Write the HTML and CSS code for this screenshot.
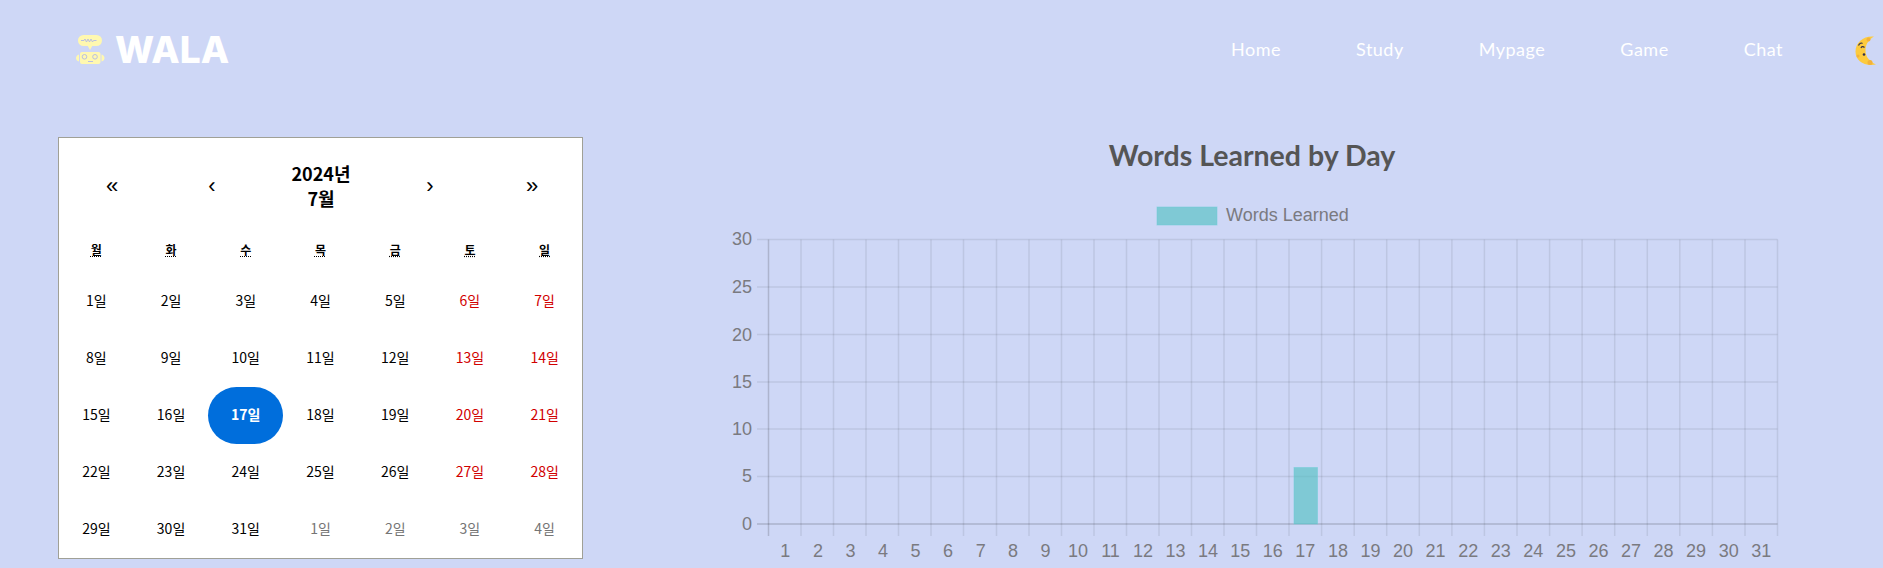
FILE: index.html
```html
<!DOCTYPE html>
<html lang="ko">
<head>
    <meta charset="UTF-8">
    <title>WALA</title>
    <link rel="stylesheet" href="styles.css">
</head>
<body>
    <header class="header">
        <a class="logo" href="#">
            <svg class="logo-icon" viewBox="0 0 30 31" width="30" height="31">
                <rect x="3" y="1" width="24" height="11" rx="5.5" fill="#fff8b0"/>
                <path d="M12.5 11.5h5L15 16z" fill="#fff8b0"/>
                <path d="M6 6.500h3l1-1.500 1.500 3 1.500-3 1.500 3 1.500-3 1.500 3 1-1.500h3" fill="none" stroke="#b9bfe0" stroke-width="1"/>
                <rect x="5" y="18" width="20.500" height="12" rx="2" fill="#fff8b0"/>
                <path d="M4 20.500c-2 .5-3 2-3 3.500s1 3 3 3.500zM26.500 20.500c2 .5 3 2 3 3.500s-1 3-3 3.500z" fill="#fff8b0"/>
                <circle cx="9.500" cy="22.800" r="2.300" fill="none" stroke="#b9bfe0" stroke-width="1"/>
                <circle cx="20" cy="22.800" r="2.300" fill="none" stroke="#b9bfe0" stroke-width="1"/>
                <path d="M13 27.500h5" stroke="#b9bfe0" stroke-width="1"/>
            </svg>
            <span class="logo-text">WALA</span>
        </a>
        <nav class="nav">
            <a href="#">Home</a>
            <a href="#">Study</a>
            <a href="#">Mypage</a>
            <a href="#">Game</a>
            <a href="#">Chat</a>
            <svg class="moon" viewBox="0 0 22 30" width="22" height="30">
                <path d="M19 .5C9 -.5 .5 6 .5 15.500S9 30.500 21 28.500C14 25 10.500 20.500 10.500 14.500S13.500 4 19 .5z" fill="#fdcb3e"/>
                <circle cx="13.500" cy="3.500" r="2" fill="#f3b23a"/>
                <circle cx="15" cy="26.500" r="2.500" fill="#f3b23a"/>
                <circle cx="3" cy="20" r="1.500" fill="#f3b23a"/>
                <path d="M3.500 9.500c1-2.500 3-3 4-2M6 12c.5-1.500 2-2 3.500-.5" fill="none" stroke="#33304a" stroke-width="1.200"/>
                <circle cx="9" cy="18.500" r="1.300" fill="#33304a"/>
            </svg>
        </nav>
    </header>

    <main class="main">
        <section class="calendar">
            <div class="cal-nav">
                <button>«</button>
                <button>‹</button>
                <span class="cal-title">2024년<br>7월</span>
                <button>›</button>
                <button>»</button>
            </div>
            <div class="cal-weekdays">
                <abbr title="월요일">월</abbr>
                <abbr title="화요일">화</abbr>
                <abbr title="수요일">수</abbr>
                <abbr title="목요일">목</abbr>
                <abbr title="금요일">금</abbr>
                <abbr title="토요일">토</abbr>
                <abbr title="일요일">일</abbr>
            </div>
            <div class="cal-days">
                <div>1일</div><div>2일</div><div>3일</div><div>4일</div><div>5일</div><div class="weekend">6일</div><div class="weekend">7일</div>
                <div>8일</div><div>9일</div><div>10일</div><div>11일</div><div>12일</div><div class="weekend">13일</div><div class="weekend">14일</div>
                <div>15일</div><div>16일</div><div class="active">17일</div><div>18일</div><div>19일</div><div class="weekend">20일</div><div class="weekend">21일</div>
                <div>22일</div><div>23일</div><div>24일</div><div>25일</div><div>26일</div><div class="weekend">27일</div><div class="weekend">28일</div>
                <div>29일</div><div>30일</div><div>31일</div><div class="other">1일</div><div class="other">2일</div><div class="other">3일</div><div class="other">4일</div>
            </div>
        </section>

        <section class="chart">
            <h2 class="chart-title">Words Learned by Day</h2>
            <svg class="chart-svg" viewBox="700 190 1104 378" width="1104" height="378">
                <!-- legend -->
                <rect x="1157" y="207" width="60" height="18" class="bar"/>
                <text x="1226" y="221" class="label">Words Learned</text>
                <!-- grid -->
                <path class="grid" d="M757 239.500H1777.500M757 287H1777.500M757 334.500H1777.500M757 382H1777.500M757 429H1777.500M757 476.500H1777.500"/>
                <path class="grid" d="M801 239.500V536M833.500 239.500V536M866 239.500V536M898.500 239.500V536M931 239.500V536M963.500 239.500V536M996.500 239.500V536M1029 239.500V536M1061.500 239.500V536M1094 239.500V536M1126.500 239.500V536M1159 239.500V536M1191.500 239.500V536M1224 239.500V536M1256.500 239.500V536M1289 239.500V536M1321.600 239.500V536M1354.200 239.500V536M1386.700 239.500V536M1419.300 239.500V536M1451.900 239.500V536M1484.400 239.500V536M1517 239.500V536M1549.600 239.500V536M1582.100 239.500V536M1614.700 239.500V536M1647.300 239.500V536M1679.800 239.500V536M1712.400 239.500V536M1745 239.500V536M1777.500 239.500V536"/>
                <path class="axis" d="M768.500 239.500V536"/>
                <path class="axis axis-x" d="M757 524H1777.500"/>
                <!-- data -->
                <rect x="1294" y="467.500" width="23.500" height="56.500" class="bar"/>
                <!-- y labels -->
                <g class="label label-y">
                    <text x="752" y="244.500">30</text>
                    <text x="752" y="292.500">25</text>
                    <text x="752" y="341">20</text>
                    <text x="752" y="388">15</text>
                    <text x="752" y="434.500">10</text>
                    <text x="752" y="482">5</text>
                    <text x="752" y="530">0</text>
                </g>
                <!-- x labels -->
                <g class="label label-x">
                    <text x="785.300" y="557">1</text>
                    <text x="817.900" y="557">2</text>
                    <text x="850.400" y="557">3</text>
                    <text x="883" y="557">4</text>
                    <text x="915.600" y="557">5</text>
                    <text x="948.100" y="557">6</text>
                    <text x="980.700" y="557">7</text>
                    <text x="1013" y="557">8</text>
                    <text x="1045.500" y="557">9</text>
                    <text x="1078" y="557">10</text>
                    <text x="1110.500" y="557">11</text>
                    <text x="1143" y="557">12</text>
                    <text x="1175.500" y="557">13</text>
                    <text x="1208" y="557">14</text>
                    <text x="1240.200" y="557">15</text>
                    <text x="1272.800" y="557">16</text>
                    <text x="1305.300" y="557">17</text>
                    <text x="1337.900" y="557">18</text>
                    <text x="1370.500" y="557">19</text>
                    <text x="1403" y="557">20</text>
                    <text x="1435.600" y="557">21</text>
                    <text x="1468.200" y="557">22</text>
                    <text x="1500.700" y="557">23</text>
                    <text x="1533.300" y="557">24</text>
                    <text x="1565.900" y="557">25</text>
                    <text x="1598.400" y="557">26</text>
                    <text x="1631" y="557">27</text>
                    <text x="1663.600" y="557">28</text>
                    <text x="1696.100" y="557">29</text>
                    <text x="1728.700" y="557">30</text>
                    <text x="1761.300" y="557">31</text>
                </g>
            </svg>
        </section>
    </main>
</body>
</html>
```

FILE: styles.css
```css
* {
    margin: 0;
    padding: 0;
    box-sizing: border-box;
}
html, body {
    height: 568px;
    overflow: hidden;
}
body {
    background: #ced7f6;
    font-family: "Noto Sans CJK KR", "Lato", sans-serif;
}
a {
    text-decoration: none;
    color: #fff;
}

/* header */
.header {
    height: 98px;
    display: flex;
    align-items: center;
    justify-content: space-between;
    padding: 0 6px 0 75px;
}
.logo {
    display: flex;
    align-items: center;
    gap: 10px;
}
.logo-text {
    font-family: "Inter", sans-serif;
    font-size: 37px;
    font-weight: 800;
    line-height: 1;
}
.nav {
    display: flex;
    align-items: center;
    gap: 75px;
}
.nav a {
    font-family: "Lato", sans-serif;
    font-size: 18px;
    letter-spacing: 0.5px;
}
.moon {
    margin: 4px 0 0 -3px;
}

/* calendar */
.main {
    display: flex;
    padding: 39px 0 0 58px;
}
.calendar {
    width: 525px;
    height: 422px;
    background: #fff;
    border: 1px solid #a0a096;
    color: #000;
}
.cal-nav {
    height: 91px;
    padding: 4px 0 0 3px;
    display: grid;
    grid-template-columns: 100px 100px 118px 100px 104px;
    align-items: center;
    justify-items: center;
}
.cal-nav button {
    border: 0;
    background: none;
    font-family: "Liberation Sans", sans-serif;
    font-size: 22px;
    color: #000;
    cursor: pointer;
}
.cal-title {
    text-align: center;
    font-size: 18px;
    font-weight: 700;
    line-height: 25px;
}
.cal-weekdays {
    height: 44px;
    padding-bottom: 3px;
    display: grid;
    grid-template-columns: repeat(7, 1fr);
    align-items: center;
    justify-items: center;
    font-size: 12px;
    font-weight: 700;
}
.cal-days {
    display: grid;
    grid-template-columns: repeat(7, 1fr);
    grid-auto-rows: 57px;
    font-size: 14px;
}
.cal-days div {
    display: flex;
    align-items: center;
    justify-content: center;
    padding-bottom: 3px;
    border-radius: 30px;
}
.cal-days .weekend {
    color: #d10000;
}
.cal-days .other {
    color: #757575;
}
.cal-days .active {
    background: #006edc;
    color: #fff;
    font-weight: 700;
}

/* chart */
.chart {
    width: 1104px;
    margin-left: 117px;
}
.chart-title {
    font-family: "Lato", sans-serif;
    font-size: 28.5px;
    font-weight: 700;
    line-height: 36px;
    text-align: center;
    color: #555;
}
.chart-svg {
    display: block;
    margin-top: 17px;
}
.grid {
    fill: none;
    stroke: rgba(0, 0, 0, 0.08);
    stroke-width: 1.5;
}
.axis {
    fill: none;
    stroke: rgba(0, 0, 0, 0.16);
    stroke-width: 1.5;
}
.axis-x {
    stroke-width: 2;
    stroke: rgba(0, 0, 0, 0.13);
}
.bar {
    fill: rgba(75, 192, 192, 0.6);
    stroke: rgba(110, 205, 215, 0.5);
    stroke-width: 1;
}
.label {
    font-family: "Liberation Sans", sans-serif;
    font-size: 18px;
    fill: #7a7a80;
}
.label-y {
    text-anchor: end;
}
.label-x {
    text-anchor: middle;
}
```
